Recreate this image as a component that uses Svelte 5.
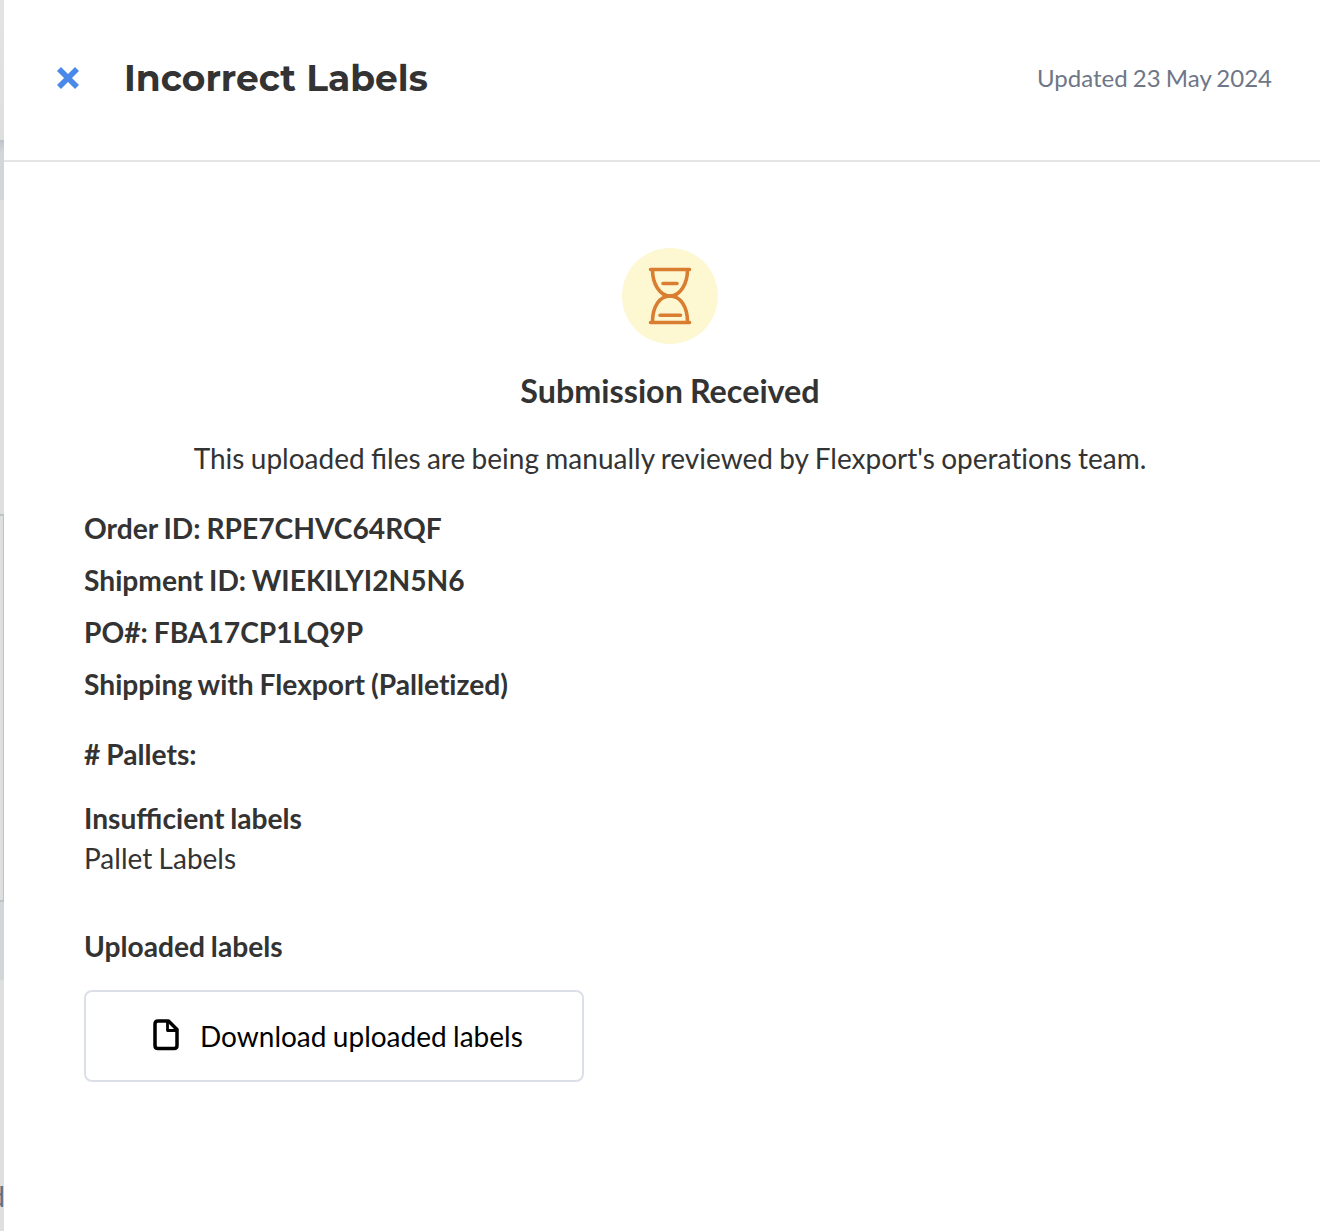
<script lang="ts">
	const details = [
		'Order ID: RPE7CHVC64RQF',
		'Shipment ID: WIEKILYI2N5N6',
		'PO#: FBA17CP1LQ9P',
		'Shipping with Flexport (Palletized)'
	];
</script>

<div class="page">
	<div class="backdrop" aria-hidden="true">
		<div class="top"></div>
		<div class="band"></div>
		<div class="gap"></div>
		<div class="card"></div>
		<div class="band lower"></div>
		<div class="rest"><span>d</span></div>
	</div>

	<div class="panel">
		<header>
			<button class="close" aria-label="Close">
				<svg width="24" height="24" viewBox="0 0 24 24">
					<path d="M3 3L21 21M21 3L3 21" />
				</svg>
			</button>
			<h1>Incorrect Labels</h1>
			<span class="updated">Updated 23 May 2024</span>
		</header>

		<main>
			<section class="status">
				<div class="badge">
					<svg width="96" height="96" viewBox="0 0 96 96">
						<path d="M28.5 21.5H67.5M28.5 74.5H67.5" />
						<path d="M30.5 22C30.5 36 38 48 48 48S65.500 36 65.500 22" />
						<path d="M30.500 74C30.500 58 38 48 48 48S65.500 58 65.500 74" />
						<path d="M41 35.500H55M38 67.300H58.500" />
					</svg>
				</div>
				<h2>Submission Received</h2>
				<p>
					This uploaded files are being manually reviewed by Flexport's
					<span class="plain">operations</span> team.
				</p>
			</section>

			<section class="details">
				{#each details as line}
					<div class="line plain">{line}</div>
				{/each}
			</section>

			<div class="pallets">&#35; Pallets:</div>

			<section class="issue">
				<strong>Insufficient labels</strong>
				<span>Pallet Labels</span>
			</section>

			<section class="uploads">
				<strong>Uploaded labels</strong>
				<button class="download">
					<svg width="26" height="32" viewBox="0 0 26 32">
						<path d="M5 2H15.500L24 10.500V26.500Q24 29.500 21 29.500H5Q2 29.500 2 26.500V5Q2 2 5 2Z" />
						<path class="fold" d="M14.500 2V11.500H24" />
					</svg>
					<span>Download uploaded labels</span>
				</button>
			</section>
		</main>
	</div>
</div>

<style>
	:global(body) {
		margin: 0;
	}

	.page {
		display: flex;
		height: 1231px;
		overflow: hidden;
		font-family: Lato, 'Liberation Sans', sans-serif;
		color: #333;
		background: #fff;
	}

	.backdrop {
		display: flex;
		flex-direction: column;
		flex: 0 0 4px;
		overflow: hidden;
		background: #dedfdf;
	}

	.top {
		height: 140px;
		background: linear-gradient(#e3e4e3, #dddfde);
	}

	.band {
		height: 60px;
		background: linear-gradient(#bfc4ca, #d2d6d9 12px);
	}

	.gap {
		height: 314px;
	}

	.card {
		box-sizing: border-box;
		height: 388px;
		border-top: 2px solid #bdc3c6;
		border-right: 1px solid #bdc3c6;
		border-bottom: 2px solid #bdc3c6;
	}

	.band.lower {
		height: 78px;
		background: #d2d6d9;
	}

	.rest {
		display: flex;
		flex: 1;
		justify-content: flex-end;
		align-items: flex-end;
		padding: 0 0 18px;
	}

	.rest span {
		margin-right: -1px;
		font-size: 28px;
		line-height: 34px;
		color: #64707c;
	}

	.panel {
		flex: 1;
		min-width: 0;
	}

	header {
		box-sizing: border-box;
		display: flex;
		align-items: center;
		height: 162px;
		padding: 0 48px 4px 52px;
		border-bottom: 2px solid #e5e5e5;
	}

	button {
		margin: 0;
		padding: 0;
		border: 0;
		background: none;
		font: inherit;
		word-spacing: inherit;
		cursor: pointer;
	}

	.close {
		display: flex;
	}

	.close svg {
		fill: none;
		stroke: #4a89e8;
		stroke-width: 5.6;
	}

	h1 {
		margin: 0 auto 0 44px;
		font-family: Montserrat, Inter, sans-serif;
		font-size: 36px;
		font-weight: 700;
		line-height: 44px;
	}

	.updated {
		font-size: 24px;
		line-height: 32px;
		word-spacing: -1px;
		color: #6e7687;
	}

	main {
		padding: 86px 64px 0 80px;
		font-size: 28px;
		line-height: 40px;
		word-spacing: -0.8px;
	}

	.plain {
		font-variant-ligatures: none;
	}

	.status {
		display: flex;
		flex-direction: column;
		align-items: center;
	}

	.badge {
		width: 96px;
		height: 96px;
		border-radius: 50%;
		background: #fdf7d2;
	}

	.badge svg {
		display: block;
		fill: none;
		stroke: #d97d31;
		stroke-width: 3.6;
		stroke-linecap: round;
	}

	h2 {
		margin: 23px 0 0;
		font-size: 32.3px;
		font-weight: 700;
		line-height: 48px;
	}

	p {
		margin: 23px 0 0;
	}

	.details {
		margin-top: 24px;
	}

	.details,
	.pallets,
	strong {
		font-size: 28.2px;
		font-weight: 700;
		word-spacing: -1px;
	}

	.line {
		line-height: 52px;
	}

	.pallets {
		margin-top: 24px;
	}

	.issue,
	.uploads {
		display: flex;
		flex-direction: column;
		align-items: flex-start;
	}

	.issue {
		margin-top: 24px;
	}

	.uploads {
		margin-top: 48px;
	}

	.download {
		box-sizing: border-box;
		display: flex;
		align-items: center;
		gap: 21px;
		width: 500px;
		height: 92px;
		margin-top: 24px;
		padding-left: 67px;
		border: 2px solid #dbe0e8;
		border-radius: 8px;
		color: #000;
	}

	.download svg {
		position: relative;
		top: -1px;
		fill: none;
		stroke: #000;
		stroke-width: 3.5;
		stroke-linejoin: round;
	}

	.download .fold {
		stroke-width: 2.8;
	}
</style>
